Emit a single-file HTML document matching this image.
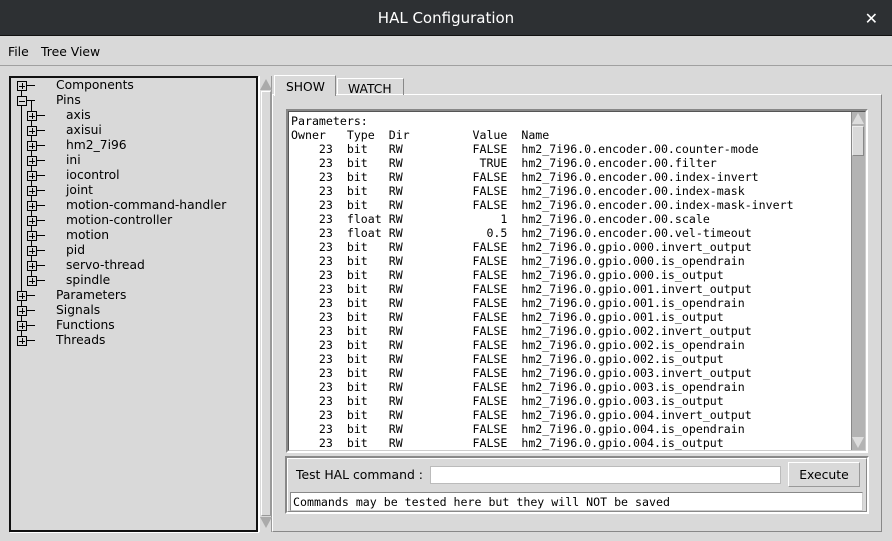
<!DOCTYPE html>
<html><head><meta charset="utf-8"><style>
*{margin:0;padding:0;box-sizing:border-box}
body{width:892px;height:541px;background:#d9d9d9;position:relative;overflow:hidden;font-family:"DejaVu Sans","Liberation Sans",sans-serif;font-size:12.4px;color:#000}
.a{position:absolute}
.title{left:0;top:0;width:892px;height:36px;background:#2d3033;color:#fff;font-size:15px;text-align:center;line-height:37px;border-bottom:1px solid #111}
.menu{top:37px;left:0;width:892px;height:29px;border-bottom:1px solid #a0a0a0}
.tree{left:9px;top:76px;width:249px;height:456px;border:2px solid #111;box-shadow:1px 1px 0 #fff}
.t{position:absolute;font-size:12.3px;line-height:15px}
.bx{position:absolute;width:10px;height:10px;border:1px solid #000;background:#d9d9d9}
.bx:before{content:"";position:absolute;left:1px;top:3.5px;width:6px;height:1px;background:#000}
.bx.p:after{content:"";position:absolute;left:3.5px;top:1px;width:1px;height:6px;background:#000}
.hl{position:absolute;height:1px;background:#000;width:9px}
.vl{position:absolute;width:1px;background:#000}
pre{font-family:"DejaVu Sans Mono","Liberation Mono",monospace;font-size:11.6px;line-height:14px}
</style></head><body>
<div class="a title">HAL Configuration</div>
<div class="a" style="right:14px;top:9px;color:#fff;font-size:16px;font-weight:bold">✕</div>
<div class="a menu"><span class="a" style="left:8px;top:7px">File</span><span class="a" style="left:41px;top:7px">Tree View</span></div>

<div class="a tree"></div>
<div class="a" style="left:259px;top:76px;width:13px;height:456px;background:#d9d9d9;border-left:1px solid #fff;border-right:1px solid #999"></div>
<div class="a" style="left:260px;top:79px;width:0;height:0;border-left:6px solid transparent;border-right:6px solid transparent;border-bottom:11px solid #aaa"></div>
<div class="a" style="left:261px;top:91px;width:10px;height:425px;border:1px solid #999;border-top-color:#fff;border-left-color:#fff"></div>
<div class="a" style="left:260px;top:517px;width:0;height:0;border-left:6px solid transparent;border-right:6px solid transparent;border-top:11px solid #aaa"></div>

<div id="tr"></div>

<div class="a" style="left:272px;top:94px;width:610px;height:438px;border:1px solid #fff;border-right-color:#888;border-bottom-color:#888"></div>
<div class="a" style="left:274px;top:75px;width:62px;height:21px;background:#d9d9d9;border:1px solid #fff;border-bottom:none;border-right-color:#888;font-size:12.3px;padding:4px 0 0 11px">SHOW</div>
<div class="a" style="left:337px;top:78px;width:67px;height:17px;border:1px solid #fff;border-bottom:none;border-right-color:#888;font-size:12.3px;padding:3px 0 0 10px">WATCH</div>

<div class="a" style="left:286px;top:109px;width:582px;height:344px;border:2px solid #888;border-right-color:#fff;border-bottom-color:#fff;background:#fff"></div>
<div class="a" style="left:288px;top:111px;width:578px;height:340px;border:1px solid #555;border-right-color:#ccc;border-bottom-color:#ccc"></div>
<pre class="a" style="left:291px;top:114px;width:558px;height:336px;overflow:hidden">Parameters:
Owner   Type  Dir         Value  Name
    23  bit   RW          FALSE  hm2_7i96.0.encoder.00.counter-mode
    23  bit   RW           TRUE  hm2_7i96.0.encoder.00.filter
    23  bit   RW          FALSE  hm2_7i96.0.encoder.00.index-invert
    23  bit   RW          FALSE  hm2_7i96.0.encoder.00.index-mask
    23  bit   RW          FALSE  hm2_7i96.0.encoder.00.index-mask-invert
    23  float RW              1  hm2_7i96.0.encoder.00.scale
    23  float RW            0.5  hm2_7i96.0.encoder.00.vel-timeout
    23  bit   RW          FALSE  hm2_7i96.0.gpio.000.invert_output
    23  bit   RW          FALSE  hm2_7i96.0.gpio.000.is_opendrain
    23  bit   RW          FALSE  hm2_7i96.0.gpio.000.is_output
    23  bit   RW          FALSE  hm2_7i96.0.gpio.001.invert_output
    23  bit   RW          FALSE  hm2_7i96.0.gpio.001.is_opendrain
    23  bit   RW          FALSE  hm2_7i96.0.gpio.001.is_output
    23  bit   RW          FALSE  hm2_7i96.0.gpio.002.invert_output
    23  bit   RW          FALSE  hm2_7i96.0.gpio.002.is_opendrain
    23  bit   RW          FALSE  hm2_7i96.0.gpio.002.is_output
    23  bit   RW          FALSE  hm2_7i96.0.gpio.003.invert_output
    23  bit   RW          FALSE  hm2_7i96.0.gpio.003.is_opendrain
    23  bit   RW          FALSE  hm2_7i96.0.gpio.003.is_output
    23  bit   RW          FALSE  hm2_7i96.0.gpio.004.invert_output
    23  bit   RW          FALSE  hm2_7i96.0.gpio.004.is_opendrain
    23  bit   RW          FALSE  hm2_7i96.0.gpio.004.is_output</pre>
<div class="a" style="left:851px;top:112px;width:14px;height:338px;background:#b3b3b3;border-left:1px solid #888"></div>
<div class="a" style="left:852px;top:113px;width:0;height:0;border-left:6px solid transparent;border-right:6px solid transparent;border-bottom:11px solid #ddd"></div>
<div class="a" style="left:852px;top:126px;width:12px;height:30px;background:#d9d9d9;border:1px solid #eee;border-right-color:#888;border-bottom-color:#888"></div>
<div class="a" style="left:852px;top:437px;width:0;height:0;border-left:6px solid transparent;border-right:6px solid transparent;border-top:11px solid #ddd"></div>

<div class="a" style="left:285px;top:456px;width:584px;height:58px;border:2px solid #888;border-right-color:#fff;border-bottom-color:#fff"></div>
<div class="a" style="left:287px;top:458px;width:580px;height:54px;border:1px solid #fff;border-right-color:#888;border-bottom-color:#888"></div>
<div class="a" style="left:296px;top:467px;font-size:12.4px">Test HAL command :</div>
<div class="a" style="left:430px;top:466px;width:351px;height:18px;background:#fff;border:1px solid #bbb"></div>
<div class="a" style="left:788px;top:462px;width:72px;height:25px;border:1px solid #999;border-top-color:#fff;border-left-color:#fff;text-align:center;line-height:24px;font-size:12.4px">Execute</div>
<div class="a" style="left:290px;top:492px;width:573px;height:19px;background:#fff;border:1px solid #888;border-right-color:#ccc;border-bottom-color:#ccc"></div>
<pre class="a" style="left:293px;top:495px">Commands may be tested here but they will NOT be saved</pre>

<script>
var items=[[0,'Components','p'],[0,'Pins','m'],[1,'axis'],[1,'axisui'],[1,'hm2_7i96'],[1,'ini'],[1,'iocontrol'],[1,'joint'],[1,'motion-command-handler'],[1,'motion-controller'],[1,'motion'],[1,'pid'],[1,'servo-thread'],[1,'spindle'],[0,'Parameters'],[0,'Signals'],[0,'Functions'],[0,'Threads']];
var h='';
h+='<div class="vl" style="left:21px;top:90px;height:251px"></div>';
h+='<div class="vl" style="left:31px;top:100px;height:181px"></div>';
items.forEach(function(it,i){var cy=85+i*15;var bx=it[0]?27:17;
h+='<div class="hl" style="left:'+(bx+9)+'px;top:'+cy+'px"></div>';
h+='<div class="bx '+(it[2]=='m'?'':'p')+'" style="left:'+bx+'px;top:'+(cy-4)+'px"></div>';
h+='<div class="t" style="left:'+(it[0]?66:56)+'px;top:'+(cy-7)+'px">'+it[1]+'</div>';});
document.getElementById('tr').innerHTML=h;
</script>
</body></html>
